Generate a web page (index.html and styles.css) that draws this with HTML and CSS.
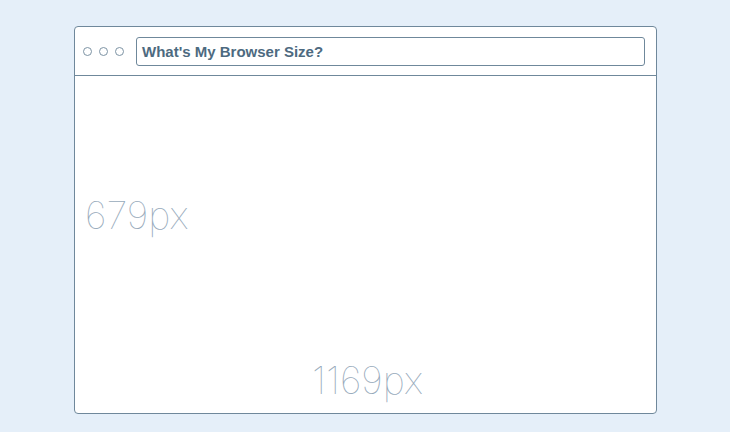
FILE: index.html
```html
<!DOCTYPE html>
<html lang="en">
<head>
	<meta charset="UTF-8">
	<title>What's My Browser Size?</title>
	<link rel="stylesheet" href="styles.css">
</head>
<body>
	<div class="window">
		<div class="toolbar">
			<div class="dots">
				<span></span>
				<span></span>
				<span></span>
			</div>
			<div class="address">What's My Browser Size?</div>
		</div>
		<div class="viewport">
			<div class="height">679px</div>
			<div class="width">1169px</div>
		</div>
	</div>
</body>
</html>
```

FILE: styles.css
```css
*{
	margin: 0;
	padding: 0;
	box-sizing: border-box;
}
body{
	background-color: #e5eff9;
	font-family: "Liberation Sans", Arial, sans-serif;
	padding-top: 26px;
}
.window{
	width: 583px;
	height: 388px;
	margin-left: 74px;
	background-color: #fff;
	border: 1px solid #6f889b;
	border-radius: 4px;
	display: flex;
	flex-direction: column;
}
.toolbar{
	height: 49px;
	border-bottom: 1px solid #6f889b;
	display: flex;
	align-items: center;
	padding: 0 11px 0 8px;
	gap: 12px;
}
.dots{
	display: flex;
	gap: 7px;
}
.dots span{
	width: 9px;
	height: 9px;
	border: 1px solid #7d93a4;
	border-radius: 50%;
}
.address{
	flex: 1;
	height: 29px;
	border: 1px solid #6f889b;
	border-radius: 3px;
	padding-left: 5px;
	line-height: 27px;
	font-size: 15px;
	font-weight: bold;
	color: #4d6a80;
}
.viewport{
	flex: 1;
	display: flex;
	flex-direction: column;
	justify-content: space-between;
	padding: 116px 0 10px 10px;
}
.height, .width{
	font-family: "Inter", "Lato", sans-serif;
	font-weight: 100;
	font-size: 38px;
	color: #97aabb;
}
.width{
	text-align: center;
	padding-right: 6px;
}
```
